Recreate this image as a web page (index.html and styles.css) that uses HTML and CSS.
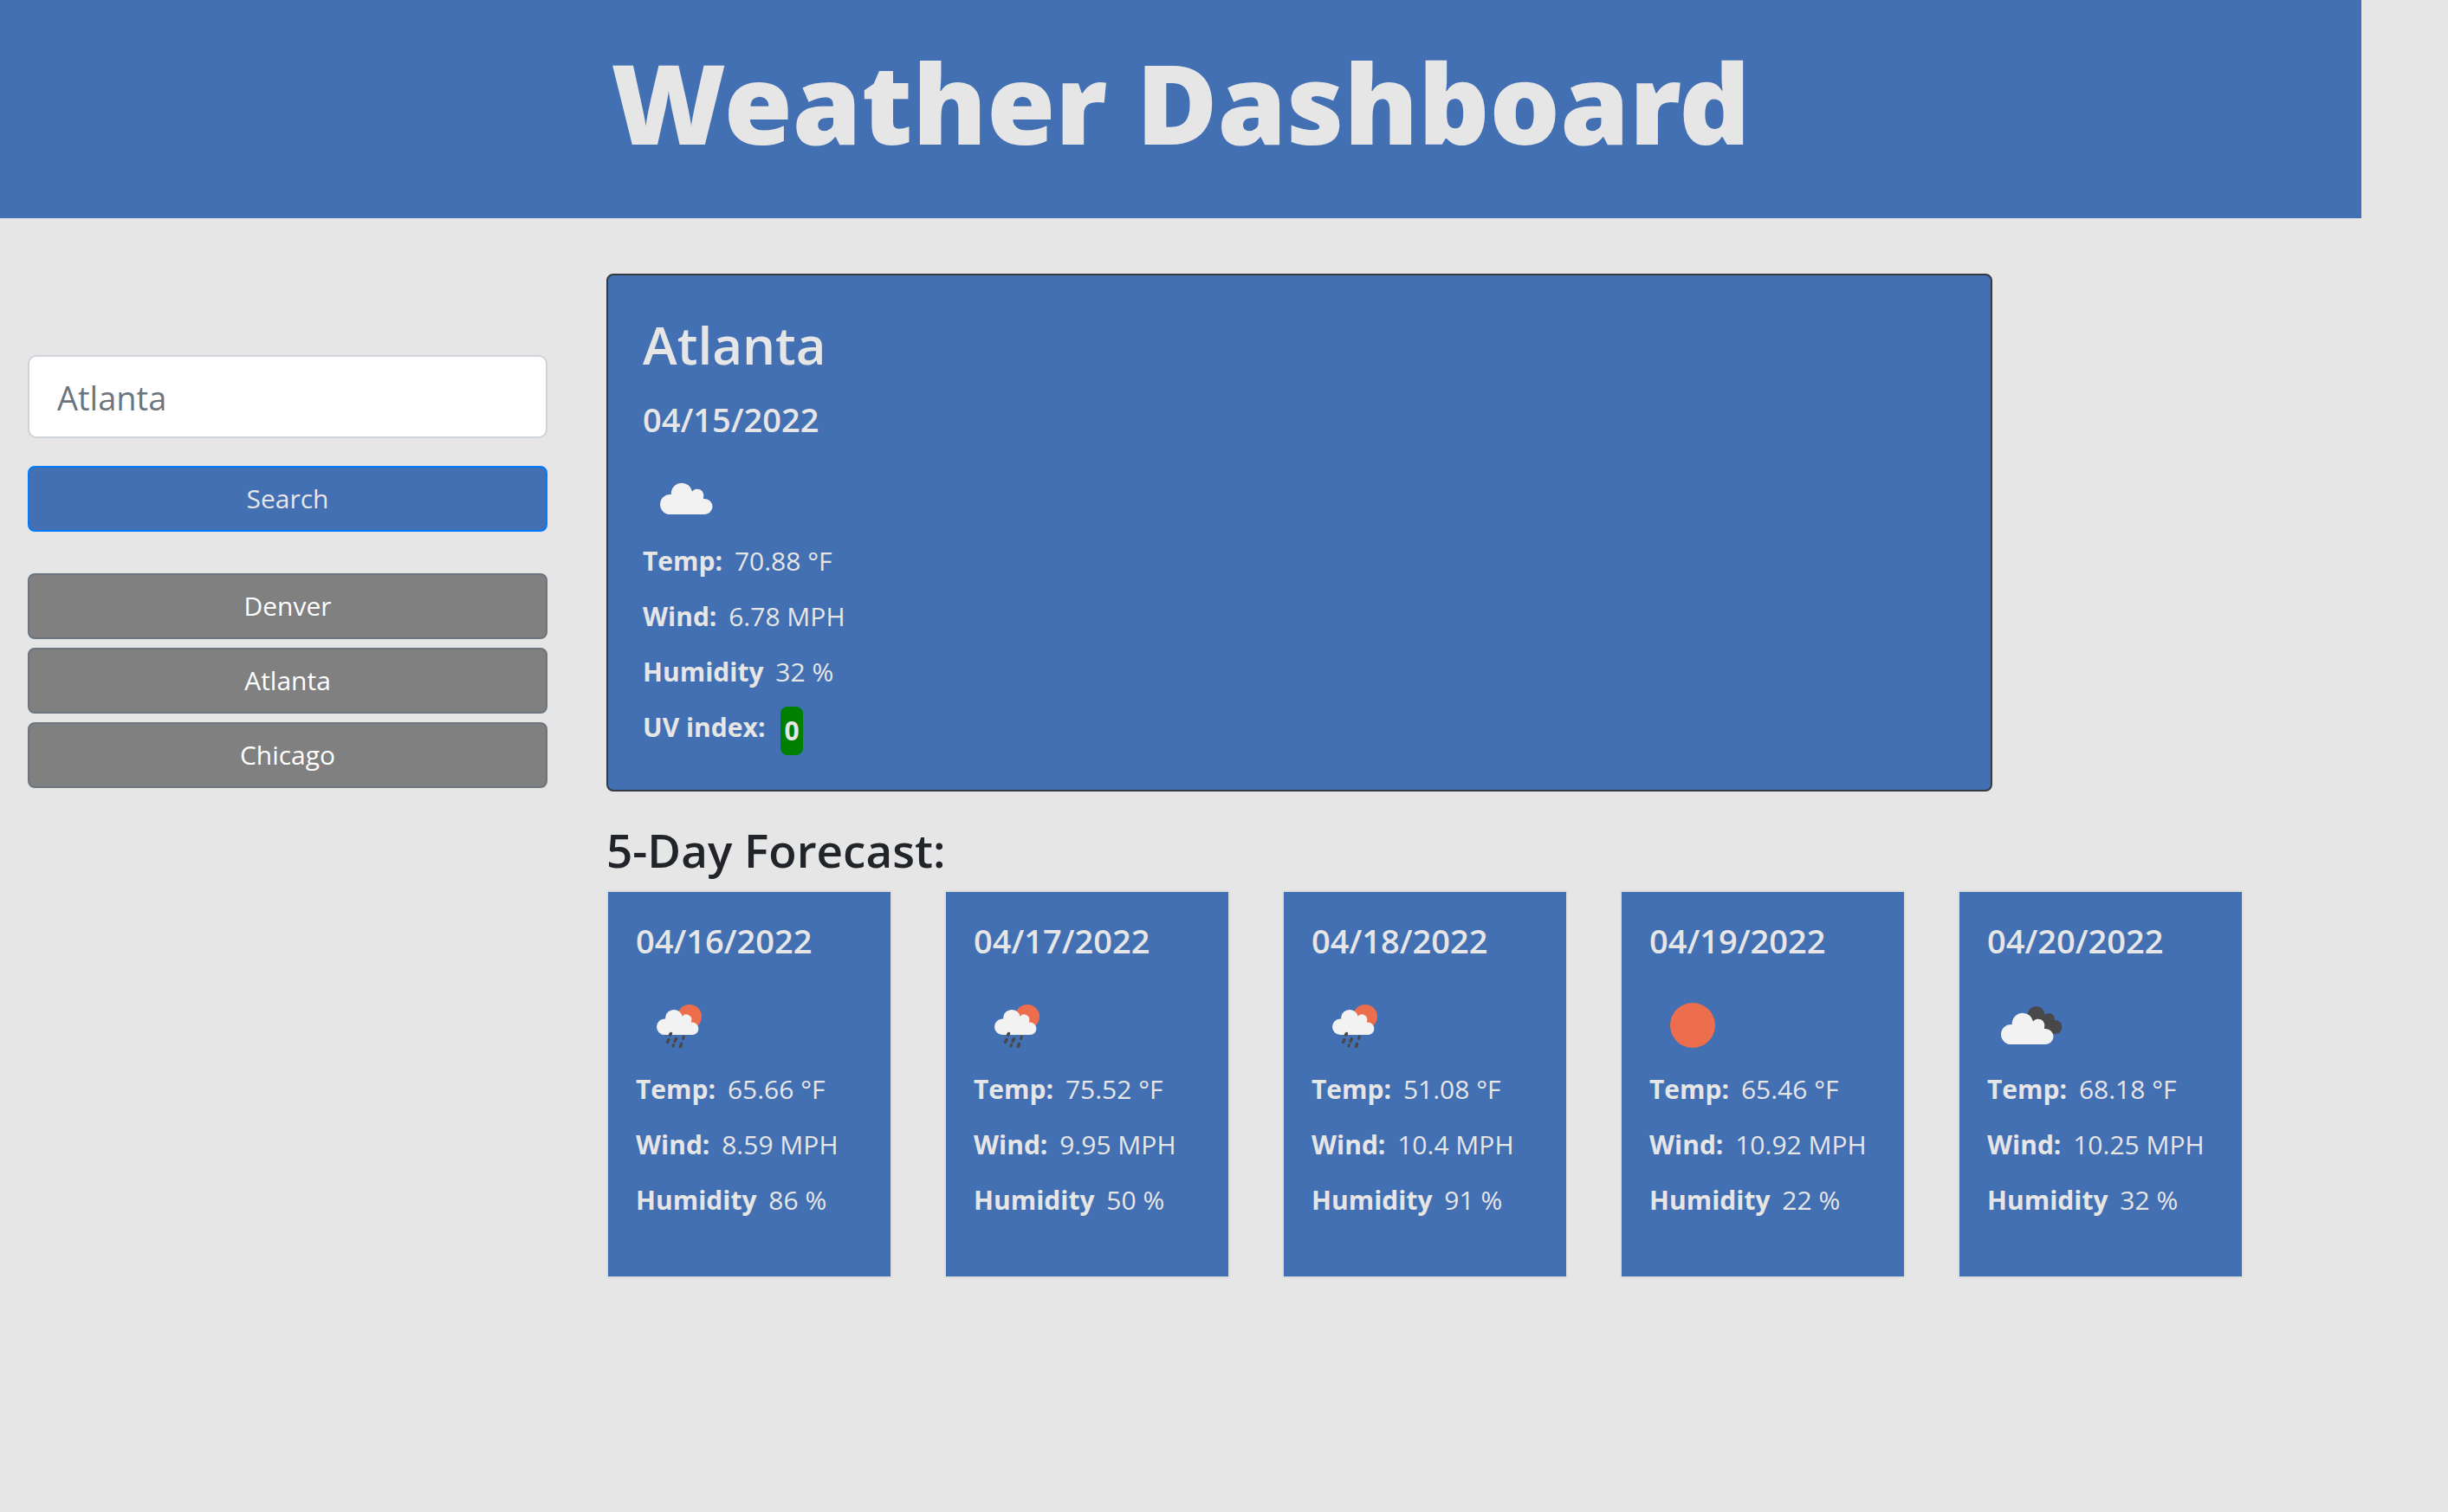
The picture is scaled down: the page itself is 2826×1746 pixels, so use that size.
FILE: index.html
```html
<!DOCTYPE html>
<html lang="en">
<head>
  <meta charset="utf-8">
  <meta name="viewport" content="width=device-width, initial-scale=1">
  <title>Weather Dashboard</title>
  <link rel="stylesheet" href="styles.css">
</head>
<body>
  <svg class="sprite" aria-hidden="true">
    <symbol id="cloud" viewBox="0 0 100 100">
      <path d="M31.500 70A11.500 11.500 0 0 1 31.500 47H32.800V44A12.300 12.300 0 0 1 57 43.500A7.500 7.500 0 0 1 70 50.500V52H71.500A9 9 0 0 1 71.500 70Z"/>
    </symbol>
    <symbol id="sun" viewBox="0 0 100 100">
      <circle cx="50" cy="50" r="26" fill="#ec6e4c"/>
    </symbol>
    <symbol id="clouds" viewBox="0 0 100 100">
      <g fill="#48484a">
        <circle cx="56.500" cy="38" r="10"/>
        <circle cx="71.500" cy="42.500" r="6.500"/>
        <circle cx="78.500" cy="52" r="8"/>
        <path d="M50 40L66 37L77 46L78 60L68 58Z"/>
      </g>
      <use href="#cloud" x="-4" y="2" width="100" height="100" fill="#f2f2f2"/>
    </symbol>
    <symbol id="rain" viewBox="0 0 100 100">
      <circle cx="62" cy="40" r="14" fill="#ec6e4c"/>
      <use href="#cloud" x="8" y="5" width="80" height="80" fill="#f2f2f2"/>
      <g stroke="#48484a" stroke-width="3.500" stroke-linecap="round">
        <path d="M40.500 59.500L39.500 61M38 66.500L36.500 69.500M46.500 65.500L45 68.500M52.500 71.500L51.500 74.500"/>
        <path stroke-width="3" d="M55.300 63L54.500 65.500M43.500 72.500L43 74"/>
      </g>
    </symbol>
  </svg>

  <header class="site-header">
    <h1 class="site-title">Weather Dashboard</h1>
  </header>

  <div class="layout">
    <aside class="sidebar">
      <form class="search">
        <input class="search-input" type="text" placeholder="Atlanta" aria-label="City">
        <button class="btn btn-primary" type="button">Search</button>
      </form>
      <div class="history">
        <button class="btn btn-city" type="button">Denver</button>
        <button class="btn btn-city" type="button">Atlanta</button>
        <button class="btn btn-city" type="button">Chicago</button>
      </div>
    </aside>

    <main class="content">
      <section class="current">
        <h2 class="city">Atlanta</h2>
        <h3 class="date">04/15/2022</h3>
        <svg class="icon icon-cloud" role="img" aria-label="Scattered clouds"><use href="#cloud"/></svg>
        <p class="reading"><strong>Temp:</strong> 70.88 °F</p>
        <p class="reading"><strong>Wind:</strong> 6.78 MPH</p>
        <p class="reading"><strong>Humidity</strong> 32 %</p>
        <p class="reading reading-uv"><strong>UV index:</strong> <span class="uv">0</span></p>
      </section>

      <h2 class="forecast-title">5-Day Forecast:</h2>
      <div class="forecast">
        <section class="day">
          <h3 class="date">04/16/2022</h3>
          <svg class="icon" role="img" aria-label="Rain"><use href="#rain"/></svg>
          <p class="reading"><strong>Temp:</strong> 65.66 °F</p>
          <p class="reading"><strong>Wind:</strong> 8.59 MPH</p>
          <p class="reading"><strong>Humidity</strong> 86 %</p>
        </section>
        <section class="day">
          <h3 class="date">04/17/2022</h3>
          <svg class="icon" role="img" aria-label="Rain"><use href="#rain"/></svg>
          <p class="reading"><strong>Temp:</strong> 75.52 °F</p>
          <p class="reading"><strong>Wind:</strong> 9.95 MPH</p>
          <p class="reading"><strong>Humidity</strong> 50 %</p>
        </section>
        <section class="day">
          <h3 class="date">04/18/2022</h3>
          <svg class="icon" role="img" aria-label="Rain"><use href="#rain"/></svg>
          <p class="reading"><strong>Temp:</strong> 51.08 °F</p>
          <p class="reading"><strong>Wind:</strong> 10.4 MPH</p>
          <p class="reading"><strong>Humidity</strong> 91 %</p>
        </section>
        <section class="day">
          <h3 class="date">04/19/2022</h3>
          <svg class="icon" role="img" aria-label="Clear sky"><use href="#sun"/></svg>
          <p class="reading"><strong>Temp:</strong> 65.46 °F</p>
          <p class="reading"><strong>Wind:</strong> 10.92 MPH</p>
          <p class="reading"><strong>Humidity</strong> 22 %</p>
        </section>
        <section class="day">
          <h3 class="date">04/20/2022</h3>
          <svg class="icon" role="img" aria-label="Broken clouds"><use href="#clouds"/></svg>
          <p class="reading"><strong>Temp:</strong> 68.18 °F</p>
          <p class="reading"><strong>Wind:</strong> 10.25 MPH</p>
          <p class="reading"><strong>Humidity</strong> 32 %</p>
        </section>
      </div>
    </main>
  </div>
</body>
</html>
```
FILE: styles.css
```css
:root {
  --blue: #436fb3;
  --paper: #e6e6e6;
  --ink: #212529;
}

*,
*::before,
*::after {
  box-sizing: border-box;
}

body {
  margin: 0;
  background: var(--paper);
  color: var(--ink);
  font-family: "Open Sans", "Noto Sans", sans-serif;
  font-size: 30px;
  line-height: 48px;
}

h1,
h2,
h3,
p {
  margin: 0;
}

.sprite {
  display: none;
}

.site-header {
  margin-right: 100px;
  padding: 38px 32px 54px;
  background: var(--blue);
  color: var(--paper);
  text-align: center;
}

.site-title {
  font-family: "Noto Sans", "Open Sans", sans-serif;
  font-size: 128px;
  font-weight: 900;
  line-height: 160px;
}

.layout {
  display: grid;
  grid-template-columns: minmax(0, 600px) minmax(0, 1fr);
  gap: 68px;
  padding: 64px 32px;
}

.sidebar {
  padding-top: 94px;
}

.search,
.history {
  display: flex;
  flex-direction: column;
}

.search {
  gap: 32px;
  margin-bottom: 48px;
}

.history {
  gap: 10px;
}

.search-input {
  width: 100%;
  height: 96px;
  padding: 2px 32px 0;
  border: 2px solid #ced4da;
  border-radius: 10px;
  background: #fff;
  color: #495057;
  font: inherit;
  font-size: 38px;
}

.search-input::placeholder {
  color: #6c757d;
  opacity: 1;
}

.btn {
  padding: 12px 24px;
  border: 2px solid;
  border-radius: 8px;
  font: inherit;
  text-align: center;
  cursor: pointer;
}

.btn-primary {
  border-color: #007bff;
  background: var(--blue);
  color: var(--paper);
}

.btn-city {
  border-color: #6c757d;
  background: #808080;
  color: #fff;
}

.current {
  max-width: 1600px;
  padding: 42px 40px 40px;
  border: 2px solid #343a40;
  border-radius: 8px;
  background: var(--blue);
  color: var(--paper);
}

.city {
  margin-bottom: 24px;
  font-size: 60px;
  font-weight: 600;
  line-height: 76px;
}

.date {
  margin-bottom: 16px;
  font-size: 38px;
  font-weight: 600;
  line-height: 48px;
}

.icon {
  display: block;
  width: 100px;
  height: 100px;
}

.icon-cloud {
  fill: #f2f2f2;
}

.reading {
  margin-bottom: 16px;
}

.reading strong {
  margin-right: 6px;
  font-weight: 700;
}

.reading-uv {
  display: flex;
  gap: 12px;
  margin-bottom: 0;
}

.uv {
  padding: 4px;
  border-radius: 8px;
  background: green;
  font-weight: 700;
}

.forecast-title {
  margin: 34px 0 12px;
  font-size: 53px;
  font-weight: 600;
  line-height: 68px;
}

.forecast {
  display: grid;
  grid-template-columns: repeat(5, minmax(0, 1fr));
  gap: 60px;
  max-width: 1890px;
}

.day {
  padding: 32px 32px 48px;
  border: 2px solid rgba(0, 0, 0, 0.03);
  background: var(--blue);
  background-clip: padding-box;
  color: var(--paper);
}

.day .date {
  margin-bottom: 24px;
}
```
